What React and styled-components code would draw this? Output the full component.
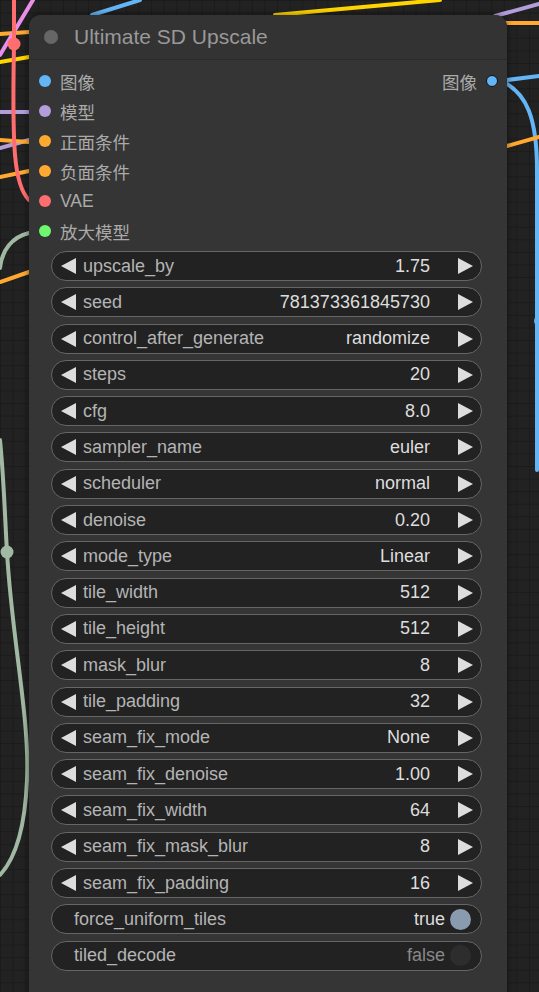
import React from "react";
import styled, { createGlobalStyle } from "styled-components";

const Global = createGlobalStyle`
  html, body { margin: 0; padding: 0; background: #222; }
  body { font-family: "Liberation Sans", Arial, "Noto Sans CJK SC", sans-serif; }
`;

const Canvas = styled.div`
  position: relative;
  width: 539px;
  height: 992px;
  overflow: hidden;
  background-color: #222;
  background-image:
    linear-gradient(to right, #1b1b1b 1px, transparent 1px),
    linear-gradient(to bottom, #1b1b1b 1px, transparent 1px);
  background-size: 12.6px 12.6px;
  padding: 15px 0 0 29px;
  box-sizing: border-box;
`;

const Wires = styled.svg`
  position: absolute;
  left: 0;
  top: 0;
  pointer-events: none;
`;

const Node = styled.div`
  position: relative;
  width: 478px;
  height: 1000px;
  background: #353535;
  border-radius: 12px 12px 0 0;
  box-shadow: 0 0 6px rgba(0, 0, 0, 0.5);
`;

const TitleBar = styled.div`
  height: 45px;
  display: flex;
  align-items: center;
  gap: 16px;
  padding-left: 15px;
  border-bottom: 1px solid #2b2b2b;
  border-radius: 12px 12px 0 0;
  background: #333;
  box-sizing: border-box;
  color: #999;
  font-size: 21px;
`;

const TitleDot = styled.span`
  width: 14px;
  height: 14px;
  border-radius: 50%;
  background: #666;
`;

const Body = styled.div`
  padding-top: 6px;
`;

const IoRow = styled.div`
  height: 30px;
  display: flex;
  align-items: center;
  justify-content: space-between;
  padding: 0 9px 0 9px;
  font-size: 17.5px;
  color: #aaa;
`;

const Slot = styled.span`
  display: flex;
  align-items: center;
  gap: 9px;
`;

const Dot = styled.span`
  width: 12px;
  height: 12px;
  border-radius: 50%;
  background: ${(p) => p.color};
  box-sizing: border-box;
  border: ${(p) => (p.$out ? "1.5px solid #111" : "none")};
  margin-left: ${(p) => (p.$out ? "0" : "1px")};
`;

const Widgets = styled.div`
  display: flex;
  flex-direction: column;
  gap: 6.3px;
  margin: 5px 25px 0 22px;
`;

const Widget = styled.div`
  height: 30px;
  display: flex;
  align-items: center;
  background: #222;
  border: 1px solid #666;
  border-radius: 15px;
  box-sizing: border-box;
  font-size: 18px;
  padding: 0 8px 0 9px;
`;

const Arrow = styled.span`
  width: 0;
  height: 0;
  border-top: 8px solid transparent;
  border-bottom: 8px solid transparent;
  ${(p) =>
    p.$right
      ? "border-left: 15px solid #ddd; margin-left: 28px;"
      : "border-right: 15px solid #ddd; margin-right: 7px;"}
`;

const Label = styled.span`
  flex: 1;
  color: #b4b4b4;
  white-space: nowrap;
  padding-left: ${(p) => (p.$toggle ? "13px" : "0")};
`;

const Value = styled.span`
  color: ${(p) => (p.$off ? "#888" : "#ddd")};
  white-space: nowrap;
`;

const Knob = styled.span`
  width: 21px;
  height: 21px;
  border-radius: 50%;
  margin-left: 5px;
  margin-right: 2px;
  background: ${(p) => (p.$on ? "#8a9bb0" : "#2d2d2d")};
`;

const inputs = [
  ["图像", "#64b5f6"],
  ["模型", "#b39ddb"],
  ["正面条件", "#ffa931"],
  ["负面条件", "#ffa931"],
  ["VAE", "#ff6e6e"],
  ["放大模型", "#70f770"],
];

const params = [
  ["upscale_by", "1.75"],
  ["seed", "781373361845730"],
  ["control_after_generate", "randomize"],
  ["steps", "20"],
  ["cfg", "8.0"],
  ["sampler_name", "euler"],
  ["scheduler", "normal"],
  ["denoise", "0.20"],
  ["mode_type", "Linear"],
  ["tile_width", "512"],
  ["tile_height", "512"],
  ["mask_blur", "8"],
  ["tile_padding", "32"],
  ["seam_fix_mode", "None"],
  ["seam_fix_denoise", "1.00"],
  ["seam_fix_width", "64"],
  ["seam_fix_mask_blur", "8"],
  ["seam_fix_padding", "16"],
];

function WireLayer() {
  const w = { fill: "none", strokeWidth: 4, strokeLinecap: "round" };
  return (
    <Wires width="539" height="992">
      <path d="M0,34 L29,32" stroke="#ffa931" {...w} />
      <path d="M0,62 L29,57" stroke="#ffd500" {...w} />
      <path d="M0,55 L33,0" stroke="#e98fe8" {...w} />
      <path d="M0,112 L29,112" stroke="#b39ddb" {...w} />
      <path d="M0,148 L29,140" stroke="#b39ddb" {...w} />
      <path d="M0,140 L29,142" stroke="#ffa931" {...w} />
      <path d="M0,177 L29,171" stroke="#ffa931" {...w} />
      <path d="M0,282 L29,272" stroke="#ffa931" {...w} />
      <path d="M14,0 L14,44 C12,150 14,185 29,200" stroke="#ff6e6e" {...w} />
      <circle cx="14" cy="44" r="6.5" fill="#ff6e6e" />
      <path d="M29,233 C12,237 2,250 0,268" stroke="#a1b9a3" {...w} />
      <path d="M0,440 C4,480 5,520 7,552 C12,640 30,720 27,780 C25,830 14,860 0,875" stroke="#a1b9a3" {...w} />
      <circle cx="7" cy="552" r="6.5" fill="#a1b9a3" />
      <path d="M92,15 L140,0" stroke="#64b5f6" {...w} />
      <path d="M275,15 L440,0" stroke="#ffd500" {...w} />
      <path d="M495,16 L539,4" stroke="#b39ddb" {...w} />
      <path d="M505,23 L539,23" stroke="#ffa931" {...w} />
      <path d="M507,80 L539,76" stroke="#64b5f6" {...w} />
      <path d="M507,84 C525,95 537,115 537,170 L537,470" stroke="#64b5f6" {...w} />
      <circle cx="540" cy="321" r="6" fill="#64b5f6" />
      <path d="M507,146 L539,137" stroke="#ffa931" {...w} />
    </Wires>
  );
}

export default function App() {
  return (
    <Canvas>
      <Global />
      <WireLayer />
      <Node>
        <TitleBar>
          <TitleDot />
          Ultimate SD Upscale
        </TitleBar>
        <Body>
          {inputs.map(([name, color], i) => (
            <IoRow key={name}>
              <Slot>
                <Dot color={color} />
                {name}
              </Slot>
              {i === 0 && (
                <Slot>
                  图像
                  <Dot color="#64b5f6" $out />
                </Slot>
              )}
            </IoRow>
          ))}
          <Widgets>
            {params.map(([name, val]) => (
              <Widget key={name}>
                <Arrow />
                <Label>{name}</Label>
                <Value>{val}</Value>
                <Arrow $right />
              </Widget>
            ))}
            <Widget>
              <Label $toggle>force_uniform_tiles</Label>
              <Value>true</Value>
              <Knob $on />
            </Widget>
            <Widget>
              <Label $toggle>tiled_decode</Label>
              <Value $off>false</Value>
              <Knob />
            </Widget>
          </Widgets>
        </Body>
      </Node>
    </Canvas>
  );
}
